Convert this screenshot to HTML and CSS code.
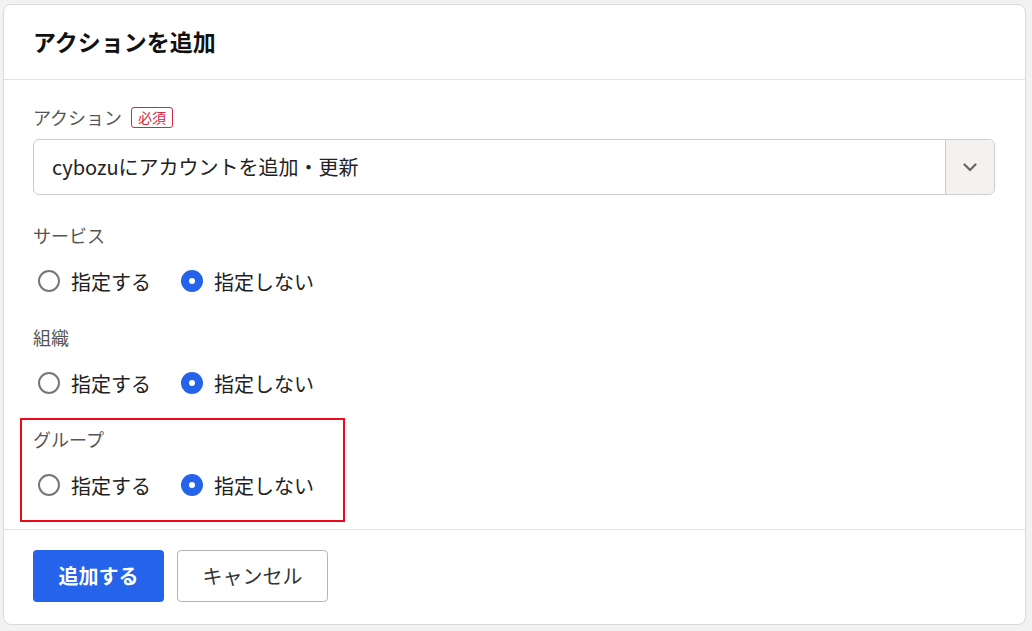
FILE: index.html
```html
<!DOCTYPE html>
<html lang="ja">
<head>
<meta charset="utf-8">
<title>アクションを追加</title>
<link rel="stylesheet" href="styles.css">
</head>
<body>
<div class="modal">
  <div class="modal-header"><h1 class="title">アクションを追加</h1></div>
  <div class="modal-body">
    <div class="field">
      <div class="label">アクション<span class="badge">必須</span></div>
      <div class="select">
        <div class="select-value">cybozuにアカウントを追加・更新</div>
        <div class="select-toggle">
          <svg width="14" height="9" viewBox="0 0 14 9"><path d="M1.5 1.5 L7 7 L12.5 1.5" fill="none" stroke="#666" stroke-width="2.2" stroke-linecap="round" stroke-linejoin="round"/></svg>
        </div>
      </div>
    </div>
    <div class="group">
      <div class="label">サービス</div>
      <div class="radios">
        <label class="radio"><span class="circle"></span>指定する</label>
        <label class="radio"><span class="circle checked"></span>指定しない</label>
      </div>
    </div>
    <div class="group">
      <div class="label">組織</div>
      <div class="radios">
        <label class="radio"><span class="circle"></span>指定する</label>
        <label class="radio"><span class="circle checked"></span>指定しない</label>
      </div>
    </div>
    <div class="group highlighted">
      <div class="label">グループ</div>
      <div class="radios">
        <label class="radio"><span class="circle"></span>指定する</label>
        <label class="radio"><span class="circle checked"></span>指定しない</label>
      </div>
    </div>
  </div>
  <div class="modal-footer">
    <button class="btn btn-primary">追加する</button>
    <button class="btn btn-secondary">キャンセル</button>
  </div>
</div>
</body>
</html>
```

FILE: styles.css
```css
* { box-sizing: border-box; }
html, body { margin: 0; padding: 0; }
body {
  background: #f2f2f2;
  font-family: "Noto Sans CJK JP", "Noto Sans", sans-serif;
  color: #222;
  width: 1032px;
  height: 631px;
  overflow: hidden;
}
.modal {
  margin: 4px 6px 0 3px;
  background: #fff;
  border: 1px solid #dadada;
  border-radius: 8px;
  height: 621px;
  display: flex;
  flex-direction: column;
}
.modal-header {
  height: 75px;
  border-bottom: 1px solid #e3e3e3;
  padding-left: 29px;
  display: flex;
  align-items: center;
}
.title {
  margin: 0;
  font-size: 23px;
  font-weight: 700;
  color: #111;
  line-height: 30px;
  padding-bottom: 2px;
}
.modal-body {
  padding: 25px 30px 28px 29px;
  display: flex;
  flex-direction: column;
  gap: 28px;
  border-bottom: 1px solid #e3e3e3;
}
.field { display: flex; flex-direction: column; gap: 10px; }
.label {
  font-size: 18px;
  line-height: 24px;
  height: 24px;
  color: #555;
  display: flex;
  align-items: center;
}
.badge {
  margin-left: 9px;
  font-size: 14px;
  line-height: 19px;
  color: #d7263d;
  border: 1px solid #d7263d;
  border-radius: 3px;
  padding: 0 6px;
}
.select {
  height: 56px;
  border: 1px solid #cfcccb;
  border-radius: 6px;
  display: flex;
  overflow: hidden;
}
.select-value {
  flex: 1;
  display: flex;
  align-items: center;
  padding-left: 18px;
  padding-bottom: 2px;
  font-size: 20px;
  color: #222;
}
.select-toggle {
  width: 49px;
  background: #f3f2f1;
  border-left: 1px solid #cfcccb;
  display: flex;
  align-items: center;
  justify-content: center;
}
.group {
  display: flex;
  flex-direction: column;
  gap: 18px;
  position: relative;
}
.highlighted::after {
  content: "";
  position: absolute;
  left: -13px;
  top: -9px;
  width: 321px;
  height: 100px;
  border: 2px solid #ee0a1b;
  pointer-events: none;
}
.radios {
  height: 32px;
  display: flex;
  align-items: center;
  gap: 30px;
  padding-left: 5px;
}
.radio {
  display: flex;
  align-items: center;
  gap: 11px;
  font-size: 20px;
  color: #222;
}
.circle {
  width: 22px;
  height: 22px;
  border-radius: 50%;
  border: 2.5px solid #777;
  background: #fff;
  position: relative;
}
.circle.checked {
  border: none;
  background: #2563eb;
}
.circle.checked::after {
  content: "";
  position: absolute;
  left: 8px;
  top: 8px;
  width: 6px;
  height: 6px;
  border-radius: 50%;
  background: #fff;
}
.modal-footer {
  padding: 20px 29px 0;
  display: flex;
  gap: 13px;
}
.btn {
  height: 52px;
  border-radius: 4px;
  font-family: inherit;
  font-size: 20px;
  padding: 0 0 2px;
  cursor: pointer;
}
.btn-primary {
  width: 131px;
  background: #2563eb;
  color: #fff;
  border: none;
  font-weight: 700;
}
.btn-secondary {
  width: 151px;
  background: #fff;
  color: #333;
  border: 1px solid #b5b5b5;
}
```
